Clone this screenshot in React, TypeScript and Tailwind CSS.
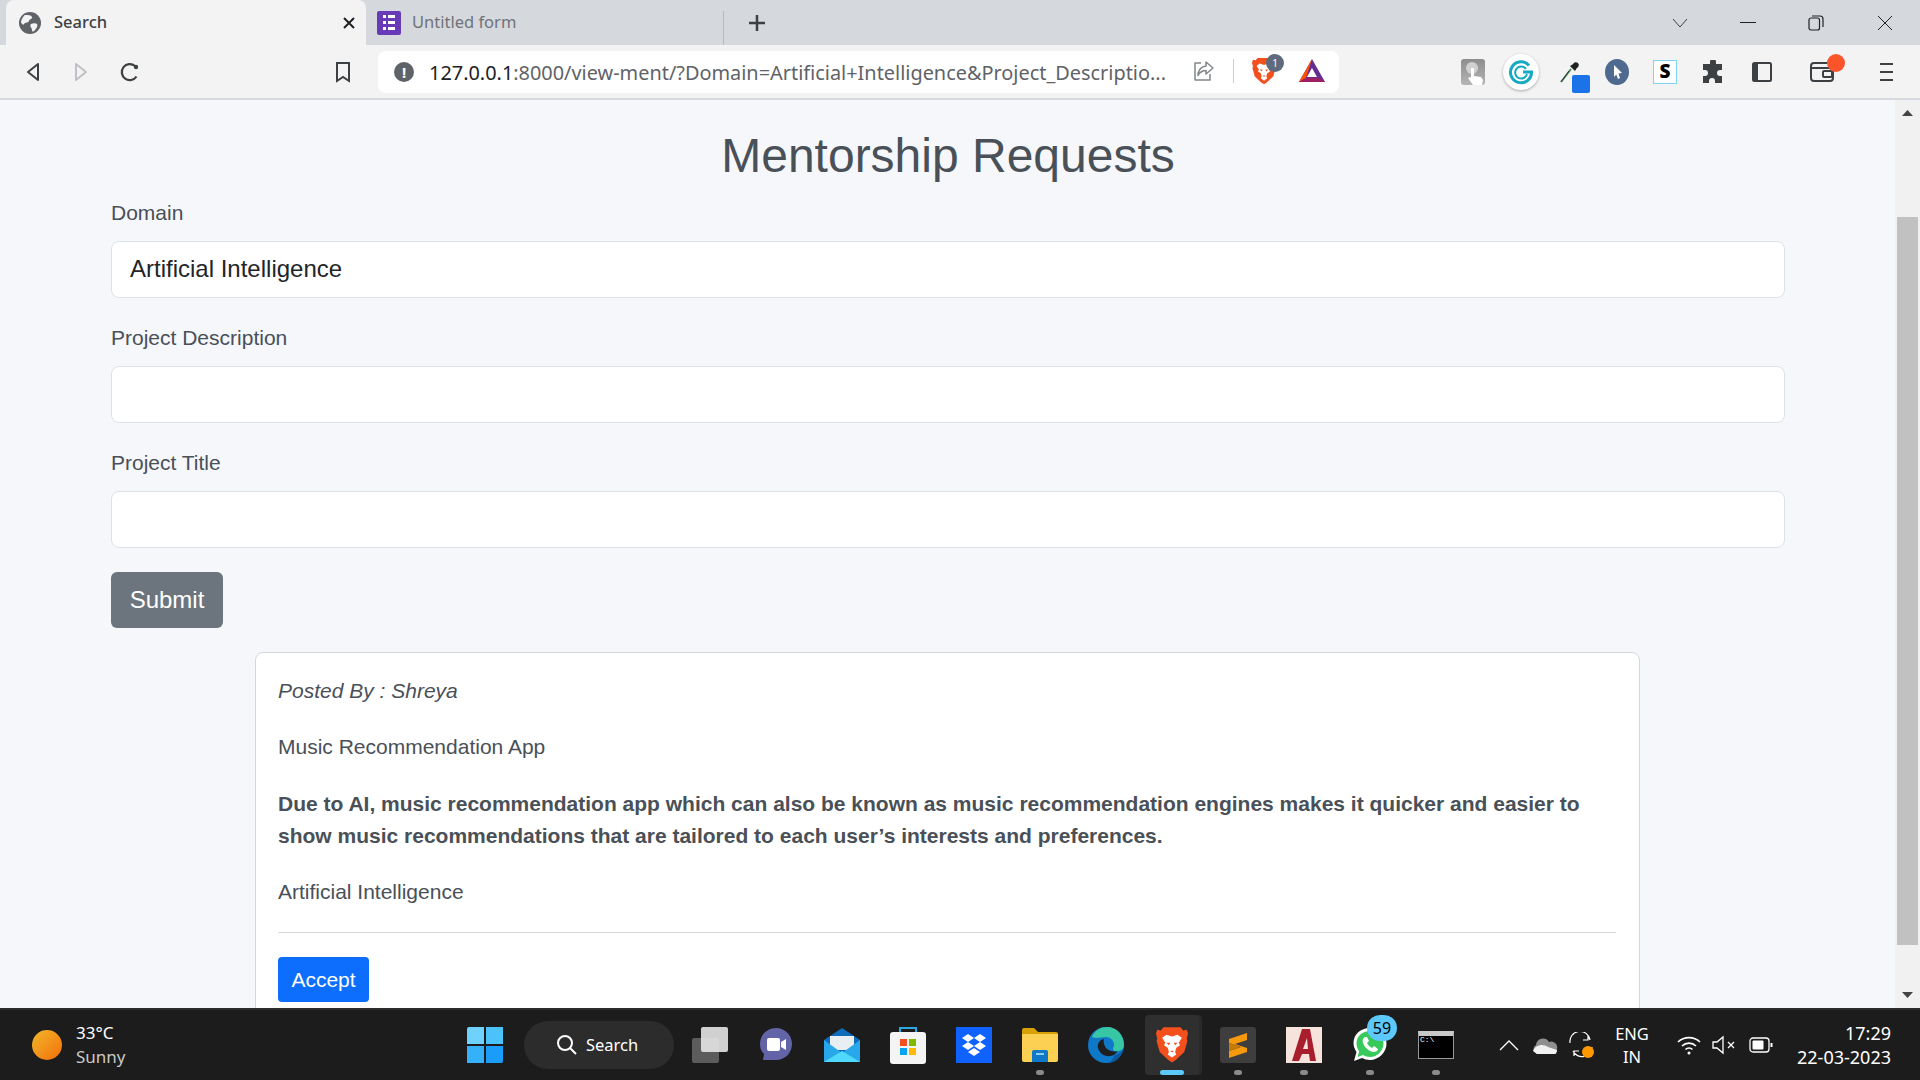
const UI = "font-['Noto_Sans','Open_Sans',sans-serif]";

const BackIcon = ({ color = "#3c4043" }: { color?: string }) => (
  <svg width="16" height="22" viewBox="0 0 16 22" fill="none" stroke={color} strokeWidth="2" strokeLinejoin="round">
    <path d="M13 3 3 11l10 8z" />
  </svg>
);

const ForwardIcon = () => (
  <svg width="16" height="22" viewBox="0 0 16 22" fill="none" stroke="#bdc1c6" strokeWidth="2" strokeLinejoin="round">
    <path d="M3 3l10 8-10 8z" />
  </svg>
);

const ReloadIcon = () => (
  <svg width="22" height="22" viewBox="0 0 22 22" fill="none" stroke="#3c4043" strokeWidth="2.2">
    <path d="M17.5 15.5A8 8 0 1 1 16 5" />
    <circle cx="17" cy="6" r="2.2" fill="#3c4043" stroke="none" />
  </svg>
);

const BookmarkIcon = () => (
  <svg width="16" height="22" viewBox="0 0 16 22" fill="none" stroke="#3c4043" strokeWidth="2">
    <path d="M2 2h12v18l-6-4-6 4z" />
  </svg>
);

const TabGlobe = () => (
  <svg width="22" height="22" viewBox="0 0 22 22">
    <circle cx="11" cy="11" r="11" fill="#5f6368" />
    <path d="M6 3c3 0 6 0 7 2s-3 2-3 4-4 1-5 3-3-1-3-2 2-6 4-7zM12 12c2-1 5-1 6 0s0 4-2 6-3 2-3 0-3-4-1-6z" fill="#f3f3f3" />
  </svg>
);

const FormIcon = () => (
  <div className="w-6 h-6 bg-[#673ab7] rounded-[2px] flex flex-col justify-center gap-[3px] px-[6px]">
    {[0, 1, 2].map((i) => (
      <div key={i} className="flex gap-[2px]">
        <div className="w-[3px] h-[3px] bg-white" />
        <div className="flex-1 h-[3px] bg-white" />
      </div>
    ))}
  </div>
);

const BraveLion = ({ size = 26 }: { size?: number }) => (
  <svg width={size} height={size * 1.2} viewBox="0 0 26 31">
    <path d="M6 1h14l2 2.500 3-.5 1 3-1 4 .5 2-2.500 9-7 6.500-3 2-3-2-7-6.500-2.500-9 .5-2-1-4 1-3 3 .5z" fill="#f4501e" />
    <path d="M8.500 7l4.500 1.500L17.500 7l3.500 2.500-2.500 4 1 2-3 2-1 3.500 1 2-3.500 2.500-3.500-2.500 1-2-1-3.500-3-2 1-2-2.500-4z" fill="#fff" />
    <path d="M11.500 13.500h-3l2 2zM14.500 13.500h3l-2 2zM11.500 20h3l-1.500 1.500z" fill="#f4501e" />
  </svg>
);

const BatIcon = () => (
  <svg width="28" height="26" viewBox="0 0 28 26">
    <path d="M14 1 1 24h26z" fill="#662d91" />
    <path d="M14 1 1 24l7-4z" fill="#ff5000" />
    <path d="M1 24h26l-6-4H8z" fill="#9e1f63" />
    <path d="M14 10 9 19h10z" fill="#fff" />
  </svg>
);

const ShareIcon = () => (
  <svg width="22" height="22" viewBox="0 0 22 22" fill="none" stroke="#80868b" strokeWidth="1.500" strokeLinejoin="round">
    <path d="M8 3H2v17h15v-6" />
    <path d="M13 2l7 6-7 6v-3.500c-4 0-6 1.500-8 5 0-5 3-9 8-9.500z" />
  </svg>
);

const TouchExt = () => (
  <div className="relative w-6 h-[26px] rounded-[3px] bg-gradient-to-b from-[#8d8d8d] to-[#b5b5b5] overflow-hidden">
    <div className="absolute left-[5px] top-[3px] w-[12px] h-[12px] rounded-full bg-[#d0d0d0]" />
    <svg className="absolute left-[6px] top-[8px]" width="18" height="18" viewBox="0 0 18 18" fill="#fff">
      <path d="M4 1h3v8l7 1 2 3-1 5H6L1 11l2-1 1 1z" />
    </svg>
  </div>
);

const GrammarlyExt = () => (
  <div className="w-9 h-9 rounded-full bg-white shadow-[0_1px_3px_rgba(0,0,0,0.3)] flex items-center justify-center">
    <svg width="26" height="26" viewBox="0 0 26 26" fill="none" stroke="#15a9c4" strokeWidth="3">
      <path d="M21 6.500A10.500 10.500 0 1 0 23.500 13H15" />
      <path d="M18 10a6 6 0 1 0 1 5" strokeWidth="2" />
    </svg>
  </div>
);

const DropperExt = () => (
  <div className="relative w-[30px] h-[34px]">
    <svg className="absolute left-0 top-[6px]" width="20" height="22" viewBox="0 0 20 22" fill="none">
      <path d="M1 21 11 8" stroke="#4c8f5b" strokeWidth="2" />
      <path d="M1 21 9 10" stroke="#333" strokeWidth="1" />
      <path d="M10 5l5 5 1.500-2.500 2-2a3 3 0 0 0-4-4l-2 2z" fill="#222" />
    </svg>
    <div className="absolute right-0 -bottom-[4px] w-[18px] h-[18px] bg-[#1a73e8] rounded-[2px]" />
  </div>
);

const CursorExt = () => (
  <svg width="24" height="26" viewBox="0 0 24 26">
    <ellipse cx="12" cy="13" rx="12" ry="13" fill="#4e6a8e" />
    <path d="M9 6l8 8-3.500 0.500L15 19l-2 1-1.700-4.500L9 18z" fill="#fff" />
  </svg>
);

const StylusExt = () => (
  <div className="w-6 h-6 bg-white border border-[#7fd3f0] flex items-center justify-center text-[19px] font-black leading-none text-black">
    S
  </div>
);

const PuzzleIcon = () => (
  <svg width="22" height="24" viewBox="0 0 22 24" fill="#3c4043">
    <path d="M8 2a3 3 0 0 1 6 0v2h6v6h-2a3 3 0 0 0 0 6h2v7h-7v-2a3 3 0 0 0-6 0v2H1v-7h2a3 3 0 0 0 0-6H1V4h7z" />
  </svg>
);

const SidebarIcon = () => (
  <svg width="20" height="22" viewBox="0 0 20 22" fill="none">
    <rect x="1" y="2" width="18" height="18" rx="1.500" stroke="#3c4043" strokeWidth="2" />
    <rect x="1" y="2" width="5" height="18" fill="#3c4043" />
  </svg>
);

const WalletIcon = () => (
  <div className="relative w-6 h-6">
    <svg width="24" height="24" viewBox="0 0 24 24" fill="none" stroke="#3c4043" strokeWidth="2">
      <rect x="1" y="3" width="22" height="18" rx="3" />
      <path d="M1 8h22" />
      <rect x="13" y="11" width="9" height="6" rx="1" />
    </svg>
    <div className="absolute -top-[6px] left-[17px] w-[18px] h-[18px] rounded-full bg-[#fb542b]" />
  </div>
);

const MenuIcon = () => (
  <div className="flex flex-col gap-[6px]">
    <div className="w-[13px] h-[2px] bg-[#3c4043]" />
    <div className="w-[13px] h-[2px] bg-[#3c4043]" />
    <div className="w-[13px] h-[2px] bg-[#3c4043]" />
  </div>
);

const WinLogo = () => (
  <div className="grid grid-cols-2 gap-[2px] w-9 h-9">
    <div className="bg-[#6fd2fc] rounded-tl-[2px]" />
    <div className="bg-[#4cc2fb]" />
    <div className="bg-[#35b1fa]" />
    <div className="bg-[#1a9df8] rounded-br-[2px]" />
  </div>
);

const TaskView = () => (
  <div className="relative w-9 h-9">
    <div className="absolute left-0 bottom-0 w-[27px] h-[25px] rounded-[2px] bg-[#5c5c5c]" />
    <div className="absolute right-0 top-0 w-[27px] h-[25px] rounded-[2px] bg-[#e4e4e4]/90" />
  </div>
);

const ChatIcon = () => (
  <svg width="34" height="36" viewBox="0 0 34 36">
    <path d="M17 1c9 0 16 7 16 16s-7 16-16 16H4l1-6C2 24 1 21 1 17 1 8 8 1 17 1z" fill="#6264a7" />
    <rect x="8" y="11" width="13" height="13" rx="2" fill="#fff" />
    <path d="M22 15l5-3v11l-5-3z" fill="#fff" />
  </svg>
);

const MailIcon = () => (
  <svg width="36" height="36" viewBox="0 0 36 36">
    <path d="M18 1 36 13v22H0V13z" fill="#0f6cbd" />
    <path d="M6 9h24v14H6z" fill="#e9eef2" />
    <path d="M0 13l18 13 18-13v22H0z" fill="#28a8ea" />
    <path d="M0 35l18-11 18 11z" fill="#50d9ff" />
  </svg>
);

const StoreIcon = () => (
  <svg width="36" height="38" viewBox="0 0 36 38">
    <path d="M10 6V2h16v4" fill="none" stroke="#2aa6e0" strokeWidth="2" />
    <rect x="0" y="6" width="36" height="32" rx="3" fill="#f4f4f4" />
    <rect x="10" y="13" width="7" height="7" fill="#f25022" />
    <rect x="19" y="13" width="7" height="7" fill="#7fba00" />
    <rect x="10" y="22" width="7" height="7" fill="#00a4ef" />
    <rect x="19" y="22" width="7" height="7" fill="#ffb900" />
  </svg>
);

const DropboxIcon = () => (
  <svg width="36" height="36" viewBox="0 0 36 36">
    <rect width="36" height="36" fill="#0f62fe" />
    <path d="M12 7l6 4-6 4-6-4zM24 7l6 4-6 4-6-4zM12 15l6 4-6 4-6-4zM24 15l6 4-6 4-6-4zM18 21l6 4-6 4-6-4z" fill="#fff" />
  </svg>
);

const FolderIcon = () => (
  <svg width="36" height="34" viewBox="0 0 36 34">
    <path d="M0 2a2 2 0 0 1 2-2h10l4 4h18a2 2 0 0 1 2 2v4H0z" fill="#d9a106" />
    <path d="M0 6h36v26a2 2 0 0 1-2 2H2a2 2 0 0 1-2-2z" fill="#fcd053" />
    <path d="M10 24a2 2 0 0 1 2-2h12a2 2 0 0 1 2 2v10H10z" fill="#0f78c9" />
    <rect x="14" y="25" width="8" height="2" fill="#8ed1f7" />
  </svg>
);

const EdgeIcon = () => (
  <svg width="36" height="36" viewBox="0 0 36 36">
    <circle cx="18" cy="18" r="18" fill="#0f78c9" />
    <path d="M4 10C7 3 13 0 19 0c10 0 17 8 17 18 0 5-5 7-9 6-3-1-2-3-1-5 1-4-3-9-8-9S7 12 4 10z" fill="#38c7a4" />
    <path d="M16 12c-5 1-7 5-6 9 2 7 9 10 16 7l4-4c-3 1-8 1-12-3-2-3-3-6-2-9z" fill="#1e1e1e" />
    <path d="M27 28c3 0 7-3 9-7-2 9-9 15-16 15 3-1 5-4 7-8z" fill="#0b5a9d" />
  </svg>
);

const SublimeIcon = () => (
  <div className="w-9 h-9 rounded-[3px] bg-[#3e3e3e] flex items-center justify-center">
    <svg width="20" height="26" viewBox="0 0 20 26" fill="#f59a0c">
      <path d="M1 7 19 1v7L7 12l12 4v4L1 26v-7l12-4-12-4z" />
      <path d="M1 11l12 4-12 4z" fill="#c77a06" />
    </svg>
  </div>
);

const AutocadIcon = () => (
  <div className="w-9 h-9 bg-[#f5e3dc] flex items-center justify-center">
    <svg width="26" height="32" viewBox="0 0 26 32" fill="#a81e2d">
      <path d="M11 0h8l6 32h-6l-1-7h-7l-3 7H1zM12 20h5l-1-11z" fillRule="evenodd" />
    </svg>
  </div>
);

const WhatsappIcon = () => (
  <svg width="36" height="36" viewBox="0 0 36 36">
    <path d="M2 34l2.500-9C2.500 22 1.500 19 1.500 16 1.500 7.500 8.500 1 18 1s16.500 7 16.500 15.500S27 33 18 33c-3 0-5.500-.8-8-2z" fill="#fff" />
    <path d="M5.500 30l1.700-5.500C5.500 22 4.500 19 4.500 16.500 4.500 9 10.500 4 18 4s13.500 5.500 13.500 12.500S25.500 30 18 30c-2.500 0-5-.7-7-2z" fill="#37c95a" />
    <path d="M13 10c-2 1-3 3-2 6 2 5 6 8 10 9 3 0 5-1 5-3l-4-3-2 2c-2-1-4-3-5-5l2-2-2-4z" fill="#fff" />
  </svg>
);

const CmdIcon = () => (
  <div className="w-9 h-[28px] bg-black border border-[#9a9a9a] border-t-[5px] border-t-[#c8c8c8] text-[8px] leading-none text-white pl-[1px] font-['Liberation_Mono',monospace]">
    C:\
  </div>
);

const Dot = ({ active = false }: { active?: boolean }) => (
  <div className={active ? "w-6 h-[5px] rounded-full bg-[#5dc8fa]" : "w-2 h-[5px] rounded-full bg-[#8a8a8a]"} />
);

const TaskItem = ({ children, dot, active }: { children: React.ReactNode; dot?: boolean; active?: boolean }) => (
  <div className="relative w-[66px] h-[60px] flex items-center justify-center">
    {active && <div className="absolute inset-y-0 left-[6px] right-[6px] rounded-[4px] bg-[#2f2f2f] shadow-[3px_0_0_#2a2a2a]" />}
    <div className="relative flex items-center justify-center">{children}</div>
    {(dot || active) && (
      <div className="absolute bottom-0 left-0 right-0 flex justify-center">
        <Dot active={active} />
      </div>
    )}
  </div>
);

const FormField = ({ label, value }: { label: string; value?: string }) => (
  <div className="mb-[25px]">
    <label className="block text-[21px] leading-[30px] mb-[13px]">{label}</label>
    <div className="h-[57px] px-[18px] pb-[2px] flex items-center bg-white border border-[#dee2e6] rounded-[8px] text-[24px] text-[#212529]">
      {value}
    </div>
  </div>
);

export default function App() {
  return (
    <div className={"h-screen w-full flex flex-col overflow-hidden " + UI}>
      {/* tab strip */}
      <div className="h-[45px] shrink-0 bg-[#d5d8dc] flex pl-[6px]">
        <div className="w-[360px] h-full bg-[#f3f3f3] rounded-t-[8px] flex items-center pl-[13px] pr-[10px] gap-[13px]">
          <TabGlobe />
          <span className="text-[16.5px] text-[#3c4043] font-medium">Search</span>
          <svg className="ml-auto" width="14" height="14" viewBox="0 0 14 14" stroke="#202124" strokeWidth="2">
            <path d="M2 2l10 10M12 2 2 12" />
          </svg>
        </div>
        <div className="w-[358px] h-full flex items-center pl-[11px] gap-[11px] relative">
          <FormIcon />
          <span className="text-[16.5px] text-[#6f7378]">Untitled form</span>
          <div className="absolute right-0 top-[11px] bottom-0 w-px bg-[#b5b8bc]" />
        </div>
        <div className="ml-[24px] flex items-center">
          <svg width="18" height="18" viewBox="0 0 18 18" stroke="#3c4043" strokeWidth="2.500">
            <path d="M9 1v16M1 9h16" />
          </svg>
        </div>
        <div className="ml-auto flex items-center pr-[27px]">
          <svg className="mr-[52px]" width="16" height="10" viewBox="0 0 16 10" fill="none" stroke="#3c4043" strokeWidth="1">
            <path d="M1 1l7 8 7-8" />
          </svg>
          <div className="mr-[52px] w-[16px] h-px bg-[#202124]" />
          <svg className="mr-[53px]" width="16" height="16" viewBox="0 0 16 16" fill="none" stroke="#202124" strokeWidth="1.200">
            <rect x="1" y="3" width="10.500" height="12" rx="2" />
            <path d="M4 1h8a3 3 0 0 1 3 3v8" />
          </svg>
          <svg width="16" height="16" viewBox="0 0 16 16" stroke="#202124" strokeWidth="1">
            <path d="M1 1l14 14M15 1 1 15" />
          </svg>
        </div>
      </div>

      {/* toolbar */}
      <div className="h-[55px] shrink-0 bg-[#f3f3f3] border-b-2 border-[#d5d8dc] flex items-center">
        <div className="w-[378px] shrink-0 flex items-center pl-[25px]">
          <BackIcon />
          <div className="ml-[32px]">
            <ForwardIcon />
          </div>
          <div className="ml-[30px]">
            <ReloadIcon />
          </div>
          <div className="ml-[194px]">
            <BookmarkIcon />
          </div>
        </div>
        <div className="w-[961px] h-[42px] bg-white rounded-[8px] flex items-center pl-[16px] pr-[13px]">
          <div className="w-5 h-5 rounded-full bg-[#5f6368] text-white text-[15px] font-bold leading-5 text-center shrink-0">!</div>
          <div className="ml-[15px] pt-[2px] text-[19.9px] whitespace-nowrap text-[#5f6368]">
            <span className="text-[#202124]">127.0.0.1</span>:8000/view-ment/?Domain=Artificial+Intelligence&amp;Project_Descriptio...
          </div>
          <div className="ml-auto flex items-center">
            <ShareIcon />
            <div className="mx-[18px] w-px h-6 bg-[#c9ccd0]" />
            <div className="relative mr-[22px]">
              <BraveLion size={24} />
              <div className="absolute -top-[3px] left-[14px] w-[18px] h-[18px] rounded-full bg-[#5f6b7d] text-white text-[10px] leading-[18px] text-center">1</div>
            </div>
            <BatIcon />
          </div>
        </div>
        <div className="flex-1 flex items-center pl-[122px]">
          <TouchExt />
          <div className="ml-[18px]"><GrammarlyExt /></div>
          <div className="ml-[21px]"><DropperExt /></div>
          <div className="ml-[15px]"><CursorExt /></div>
          <div className="ml-[24px]"><StylusExt /></div>
          <div className="ml-[25px]"><PuzzleIcon /></div>
          <div className="ml-[28px]"><SidebarIcon /></div>
          <div className="ml-[38px]"><WalletIcon /></div>
          <div className="ml-[46px]"><MenuIcon /></div>
        </div>
      </div>

      {/* page */}
      <div className="flex-1 min-h-0 flex">
        <main className="flex-1 min-w-0 overflow-hidden bg-[#f5f7fb] text-[#495057] font-['Liberation_Sans',Arial,sans-serif] pl-[111px] pr-[110px]">
          <h1 className="text-[48px] leading-[58px] text-center mt-[27px] mb-[13px] text-[#495057]">Mentorship Requests</h1>
          <FormField label="Domain" value="Artificial Intelligence" />
          <FormField label="Project Description" />
          <FormField label="Project Title" />
          <button className="h-[56px] w-[112px] -mt-[1px] bg-[#6c757d] text-white text-[24px] rounded-[6px]">Submit</button>
          <div className="mt-[24px] ml-[144px] w-[1385px] bg-white border border-[#d4d6d9] rounded-[8px] pl-[22px] pr-[23px] pt-[22px] pb-[24px] text-[21px] leading-[32px]">
            <p className="italic">Posted By : Shreya</p>
            <p className="mt-[24px]">Music Recommendation App</p>
            <p className="mt-[25px] font-bold">
              Due to AI, music recommendation app which can also be known as music recommendation engines makes it quicker and easier to show music recommendations that are tailored to each user’s interests and preferences.
            </p>
            <p className="mt-[24px]">Artificial Intelligence</p>
            <hr className="mt-[24px] border-[#d4d6d9]" />
            <button className="mt-[24px] h-[45px] w-[91px] bg-[#0d6efd] text-white rounded-[4px]">Accept</button>
          </div>
        </main>
        <div className="w-[25px] shrink-0 bg-[#f1f1f1] flex flex-col items-center">
          <svg className="mt-[10px]" width="11" height="6" viewBox="0 0 11 6" fill="#444">
            <path d="M5.500 0 11 6H0z" />
          </svg>
          <div className="mt-[101px] w-[21px] h-[728px] bg-[#c1c1c1]" />
          <svg className="mt-auto mb-[10px]" width="11" height="6" viewBox="0 0 11 6" fill="#444">
            <path d="M0 0h11L5.500 6z" />
          </svg>
        </div>
      </div>

      {/* taskbar */}
      <div className="h-[72px] shrink-0 bg-[#1c1c1c] border-t-2 border-t-[#2b2b2b] flex items-center text-white relative">
        <div className="w-[452px] shrink-0 flex items-center pl-[32px]">
          <div className="w-[30px] h-[30px] rounded-full bg-gradient-to-br from-[#eeb72a] to-[#f36d05]" />
          <div className="ml-[14px] text-[17px] leading-[24px]">
            <div>33°C</div>
            <div className="text-[#c9c9c9]">Sunny</div>
          </div>
        </div>
        <div className="w-[66px] flex justify-center">
          <WinLogo />
        </div>
        <div className="ml-[6px] w-[150px] h-[48px] rounded-full bg-[#2c2c2c] flex items-center pl-[32px] gap-[8px] text-[16.5px]">
          <svg width="22" height="22" viewBox="0 0 22 22" fill="none" stroke="#fff" strokeWidth="2">
            <circle cx="9" cy="9" r="7" />
            <path d="M14 14l6 6" />
          </svg>
          <span>Search</span>
        </div>
        <div className="ml-[3px] flex items-center">
          <TaskItem><TaskView /></TaskItem>
          <TaskItem><ChatIcon /></TaskItem>
          <TaskItem><MailIcon /></TaskItem>
          <TaskItem><StoreIcon /></TaskItem>
          <TaskItem><DropboxIcon /></TaskItem>
          <TaskItem dot><FolderIcon /></TaskItem>
          <TaskItem><EdgeIcon /></TaskItem>
          <TaskItem active><BraveLion size={32} /></TaskItem>
          <TaskItem dot><SublimeIcon /></TaskItem>
          <TaskItem dot><AutocadIcon /></TaskItem>
          <TaskItem dot>
            <WhatsappIcon />
            <div className="absolute -top-[12px] left-[15px] w-[30px] h-[26px] rounded-full bg-[#5dc8fa] text-black text-[16px] leading-[26px] text-center">59</div>
          </TaskItem>
          <TaskItem dot><CmdIcon /></TaskItem>
        </div>

        {/* tray */}
        <div className="ml-auto flex items-center pr-[29px]">
          <svg width="20" height="12" viewBox="0 0 20 12" fill="none" stroke="#fff" strokeWidth="1.300">
            <path d="M1 11l9-9 9 9" />
          </svg>
          <svg className="ml-[13px]" width="26" height="18" viewBox="0 0 26 18">
            <path d="M5 18a5 5 0 0 1-1-9 7 7 0 0 1 13-3 6 6 0 0 1 8 7l-1 5z" fill="#8f8f8f" />
            <path d="M1 15c2-6 10-8 15-4l9 3c0 2-1 4-3 4H5z" fill="#f1f1f1" />
          </svg>
          <div className="relative ml-[10px] w-[26px] h-[26px]">
            <svg width="26" height="26" viewBox="0 0 26 26" fill="none" stroke="#fff" strokeWidth="1.200">
              <path d="M2 11a10 10 0 0 1 20-3M20 3v5h-5M24 15A10 10 0 0 1 5 19M6 24v-5h5" />
            </svg>
            <div className="absolute right-0 bottom-0 w-3 h-3 rounded-full bg-[#ff9800]" />
          </div>
          <div className="ml-[15px] w-[46px] text-center text-[16.5px] leading-[23px]">
            <div>ENG</div>
            <div>IN</div>
          </div>
          <svg className="ml-[22px]" width="24" height="20" viewBox="0 0 24 20" fill="none" stroke="#fff" strokeWidth="1.600">
            <path d="M1 7a16 16 0 0 1 22 0M5 11a10 10 0 0 1 14 0M8.500 14.500a5 5 0 0 1 7 0" />
            <circle cx="12" cy="18" r="1.500" fill="#fff" stroke="none" />
          </svg>
          <svg className="ml-[11px]" width="24" height="20" viewBox="0 0 24 20" fill="none" stroke="#fff" strokeWidth="1.300">
            <path d="M1 7v6h4l6 5V2L5 7zM16 7l6 6M22 7l-6 6" />
          </svg>
          <svg className="ml-[13px]" width="24" height="16" viewBox="0 0 24 16" fill="none" stroke="#fff" strokeWidth="1.300">
            <rect x="1" y="1" width="19" height="14" rx="3" />
            <rect x="3.500" y="3.500" width="11" height="9" rx="1" fill="#fff" stroke="none" />
            <path d="M22.500 6v4" strokeWidth="2" />
          </svg>
          <div className="ml-[13px] w-[105px] text-right text-[18px] leading-[24px]">
            <div>17:29</div>
            <div className="whitespace-nowrap">22-03-2023</div>
          </div>
        </div>
      </div>
    </div>
  );
}
